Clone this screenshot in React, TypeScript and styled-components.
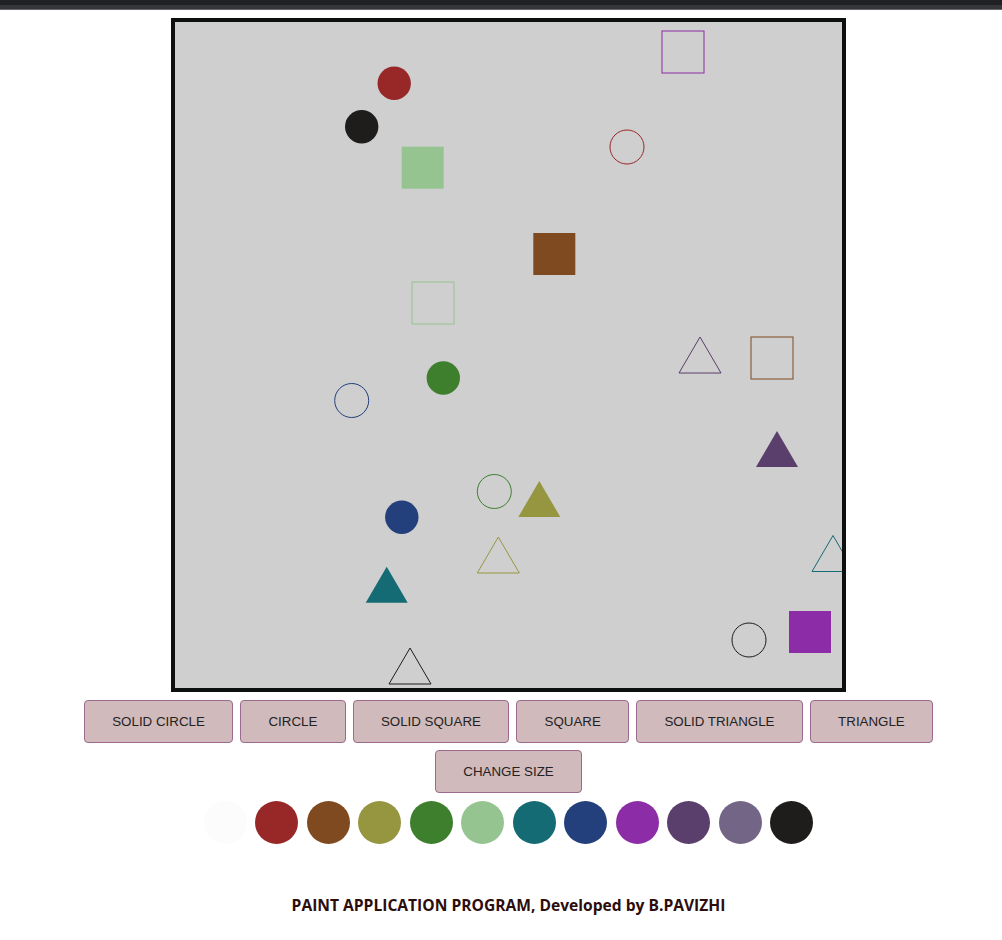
import React from "react";
import styled, { createGlobalStyle } from "styled-components";

const GlobalStyle = createGlobalStyle`
  html, body { margin: 0; padding: 0; background: #ffffff; }
  body { font-family: "Liberation Sans", Arial, sans-serif; }
`;

const TopBar = styled.div`
  height: 9px;
  background: linear-gradient(#202124 0 5px, #35363a 5px 9px);
  border-bottom: 1px solid #66676a;
`;

const Page = styled.main`
  margin-left: 15px;
  width: 987px;
  display: flex;
  flex-direction: column;
  align-items: center;
  padding-top: 8px;
`;

const CanvasFrame = styled.div`
  width: 667px;
  height: 666px;
  border: 4px solid #0e1010;
  background: #cfcfcf;
  overflow: hidden;
  svg { display: block; }
`;

const ButtonRow = styled.div<{ $top: number }>`
  display: flex;
  justify-content: center;
  gap: 7px;
  margin-top: ${(p) => p.$top}px;
`;

const ToolButton = styled.button`
  height: 43px;
  padding: 0 27.3px;
  background: #d1babb;
  border: 1px solid #9b6a8e;
  border-radius: 4px;
  font-family: "Liberation Sans", Arial, sans-serif;
  font-size: 13.333px;
  color: #222222;
  cursor: pointer;
`;

const Palette = styled.div`
  display: flex;
  justify-content: center;
  gap: 8.5px;
  margin-top: 8px;
`;

const Swatch = styled.div<{ $color: string }>`
  width: 43px;
  height: 43px;
  border-radius: 50%;
  background: ${(p) => p.$color};
`;

const Footer = styled.p`
  margin: 50px 0 0;
  font-family: "Open Sans", "Noto Sans", sans-serif;
  font-weight: 700;
  font-size: 15.6px;
  color: #2d0c0c;
`;

const colors = [
  "#fcfcfc",
  "#982828",
  "#7f4a1f",
  "#969641",
  "#3e7f2e",
  "#95c491",
  "#146b74",
  "#233f7c",
  "#8c2ca6",
  "#5a3e6b",
  "#726585",
  "#1f1c1c",
];

type Shape = { k: "circle" | "square" | "tri"; x: number; y: number; c: string; fill: boolean };

// x,y: circle = centre; square = top-left; triangle = apex
const shapes: Shape[] = [
  { k: "circle", x: 219.2, y: 61.3, c: "#982828", fill: true },
  { k: "circle", x: 186.7, y: 104.7, c: "#1f1c1c", fill: true },
  { k: "square", x: 226.7, y: 124.7, c: "#95c491", fill: true },
  { k: "square", x: 487, y: 9, c: "#8c2ca6", fill: false },
  { k: "circle", x: 452, y: 125, c: "#982828", fill: false },
  { k: "square", x: 358.3, y: 211, c: "#7f4a1f", fill: true },
  { k: "square", x: 237, y: 260, c: "#95c491", fill: false },
  { k: "tri", x: 525, y: 315, c: "#5a3e6b", fill: false },
  { k: "square", x: 576, y: 315, c: "#7f4a1f", fill: false },
  { k: "circle", x: 268.3, y: 356, c: "#3e7f2e", fill: true },
  { k: "circle", x: 176.7, y: 378.5, c: "#233f7c", fill: false },
  { k: "tri", x: 602, y: 409, c: "#5a3e6b", fill: true },
  { k: "circle", x: 319.3, y: 469.5, c: "#3e7f2e", fill: false },
  { k: "tri", x: 364.3, y: 459, c: "#969641", fill: true },
  { k: "circle", x: 226.8, y: 495.2, c: "#233f7c", fill: true },
  { k: "tri", x: 323.3, y: 515, c: "#969641", fill: false },
  { k: "tri", x: 658, y: 513.5, c: "#146b74", fill: false },
  { k: "tri", x: 211.7, y: 544.7, c: "#146b74", fill: true },
  { k: "square", x: 614, y: 589, c: "#8c2ca6", fill: true },
  { k: "circle", x: 574, y: 618, c: "#1f1c1c", fill: false },
  { k: "tri", x: 235, y: 626, c: "#1f1c1c", fill: false },
];

function renderShape(s: Shape, i: number) {
  const fill = s.fill ? s.c : "none";
  const stroke = s.fill ? "none" : s.c;
  if (s.k === "circle") {
    return <circle key={i} cx={s.x} cy={s.y} r={s.fill ? 16.7 : 17} fill={fill} stroke={stroke} strokeWidth={1} />;
  }
  if (s.k === "square") {
    return <rect key={i} x={s.x} y={s.y} width={42} height={42} fill={fill} stroke={stroke} strokeWidth={1} />;
  }
  const pts = `${s.x},${s.y} ${s.x - 21},${s.y + 36} ${s.x + 21},${s.y + 36}`;
  return <polygon key={i} points={pts} fill={fill} stroke={stroke} strokeWidth={1} strokeLinejoin="miter" />;
}

const buttonsTop = ["SOLID CIRCLE", "CIRCLE", "SOLID SQUARE", "SQUARE", "SOLID TRIANGLE", "TRIANGLE"];

export default function App() {
  return (
    <>
      <GlobalStyle />
      <TopBar />
      <Page>
        <CanvasFrame>
          <svg width={667} height={666} viewBox="0 0 667 666">
            {shapes.map(renderShape)}
          </svg>
        </CanvasFrame>
        <ButtonRow $top={8}>
          {buttonsTop.map((b) => (
            <ToolButton key={b}>{b}</ToolButton>
          ))}
        </ButtonRow>
        <ButtonRow $top={7}>
          <ToolButton>CHANGE SIZE</ToolButton>
        </ButtonRow>
        <Palette>
          {colors.map((c) => (
            <Swatch key={c} $color={c} />
          ))}
        </Palette>
        <Footer>PAINT APPLICATION PROGRAM, Developed by B.PAVIZHI</Footer>
      </Page>
    </>
  );
}
